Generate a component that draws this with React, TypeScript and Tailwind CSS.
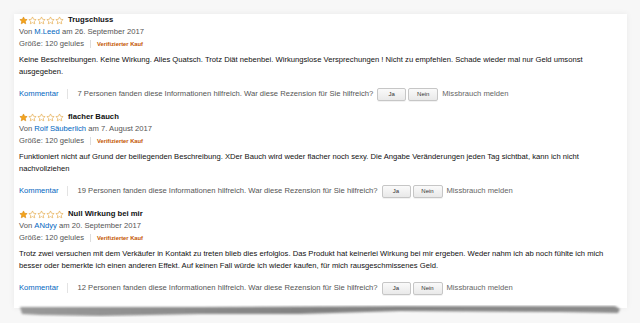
import React from "react";

const Star = ({ filled }: { filled: boolean }) => (
  <svg width="9" height="9" viewBox="0 0 24 24" className="block">
    <path
      d="M12 2.5l2.9 6.2 6.8.8-5 4.6 1.3 6.7L12 17.5l-6 3.3 1.3-6.7-5-4.6 6.8-.8z"
      fill={filled ? "#f4a41c" : "#fff"}
      stroke={filled ? "#d88a10" : "#e3a33b"}
      strokeWidth="1.6"
      strokeLinejoin="round"
    />
  </svg>
);

type Review = {
  title: string;
  author: string;
  date: string;
  body: string[];
  count: string;
};

const reviews: Review[] = [
  {
    title: "Trugschluss",
    author: "M.Leed",
    date: "am 26. September 2017",
    body: [
      "Keine Beschreibungen. Keine Wirkung. Alles Quatsch. Trotz Diät nebenbei. Wirkungslose Versprechungen ! Nicht zu empfehlen. Schade wieder mal nur Geld umsonst",
      "ausgegeben.",
    ],
    count: "7",
  },
  {
    title: "flacher Bauch",
    author: "Rolf Säuberlich",
    date: "am 7. August 2017",
    body: [
      "Funktioniert nicht auf Grund der beiliegenden Beschreibung. XDer Bauch wird weder flacher noch sexy. Die Angabe Veränderungen jeden Tag sichtbat, kann ich nicht",
      "nachvollziehen",
    ],
    count: "19",
  },
  {
    title: "Null Wirkung bei mir",
    author: "ANdyy",
    date: "am 20. September 2017",
    body: [
      "Trotz zwei versuchen mit dem Verkäufer in Kontakt zu treten blieb dies erfolglos. Das Produkt hat keinerlei Wirkung bei mir ergeben. Weder nahm ich ab noch fühlte ich mich",
      "besser oder bemerkte ich einen anderen Effekt. Auf keinen Fall würde ich wieder kaufen, für mich rausgeschmissenes Geld.",
    ],
    count: "12",
  },
];

const Btn = ({ label, w }: { label: string; w: string }) => (
  <span
    className={`inline-flex items-center justify-center h-[13px] ${w} rounded-[2px] border border-[#c6c6c6] bg-gradient-to-b from-[#fafafa] to-[#e9e9e9] text-[6px] text-[#333] shadow-[0_1px_0_rgba(0,0,0,0.05)]`}
  >
    {label}
  </span>
);

function ReviewBlock({ r }: { r: Review }) {
  return (
    <div className="flex flex-col">
      <div className="flex items-center h-[12px] gap-[4px]">
        <div className="flex">
          <Star filled />
          <Star filled={false} />
          <Star filled={false} />
          <Star filled={false} />
          <Star filled={false} />
        </div>
        <span className="font-bold text-[#111] text-[7.7px]">{r.title}</span>
      </div>
      <div className="h-[12px] flex items-center text-[#555]">
        Von&nbsp;<span className="text-[#0066c0]">{r.author}</span>&nbsp;{r.date}
      </div>
      <div className="h-[12px] flex items-center text-[#555]">
        <span>Größe: 120 gelules</span>
        <span className="mx-[6px] w-px h-[8px] bg-[#ddd]" />
        <span className="text-[#c45500] font-bold text-[5.8px]">Verifizierter Kauf</span>
      </div>
      <div className="mt-[4px] text-[#111] leading-[11.5px]">
        {r.body.map((l, i) => (
          <div key={i} className="whitespace-nowrap">
            {l}
          </div>
        ))}
      </div>
      <div className="mt-[10px] h-[14px] flex items-center text-[#555]">
        <span className="text-[#0066c0]">Kommentar</span>
        <span className="ml-[8px] mr-[10px] w-px h-[10px] bg-[#e3e3e3]" />
        <span>
          {r.count} Personen fanden diese Informationen hilfreich. War diese Rezension für Sie hilfreich?
        </span>
        <span className="ml-[4px] flex gap-[2px]">
          <Btn label="Ja" w="w-[29px]" />
          <Btn label="Nein" w="w-[30px]" />
        </span>
        <span className="ml-[4px] text-[#666]">Missbrauch melden</span>
      </div>
    </div>
  );
}

export default function App() {
  return (
    <div
      className="relative w-[640px] h-[323px] bg-[#f7f7f7] overflow-hidden text-[7.65px]"
      style={{ fontFamily: '"Liberation Sans", Arial, sans-serif' }}
    >
      <div className="absolute left-[14px] top-[14px] w-[613px] h-[294px] bg-white shadow-[0_0_6px_rgba(0,0,0,0.06)]" />
      <svg className="absolute left-0 top-0" width="640" height="323">
        <defs>
          <linearGradient id="tg" x1="0" x2="1">
            <stop offset="0" stopColor="#8a8a8a" />
            <stop offset="0.5" stopColor="#6e6e6e" />
            <stop offset="1" stopColor="#7a7a7a" />
          </linearGradient>
          <filter id="bl">
            <feGaussianBlur stdDeviation="0.8" />
          </filter>
        </defs>
        <path
          d="M20 307 L200 307 L400 306 L615 306 L620 309 L618 313 L560 312 L400 311 L300 314 L200 314 L100 316 L40 315 L22 314 Z"
          fill="url(#tg)"
          opacity="0.85"
          filter="url(#bl)"
        />
      </svg>
      <div className="relative pl-[19px] pt-[14px] flex flex-col gap-[10px]">
        <ReviewBlock r={reviews[0]} />
        <ReviewBlock r={reviews[1]} />
        <ReviewBlock r={reviews[2]} />
      </div>
    </div>
  );
}
